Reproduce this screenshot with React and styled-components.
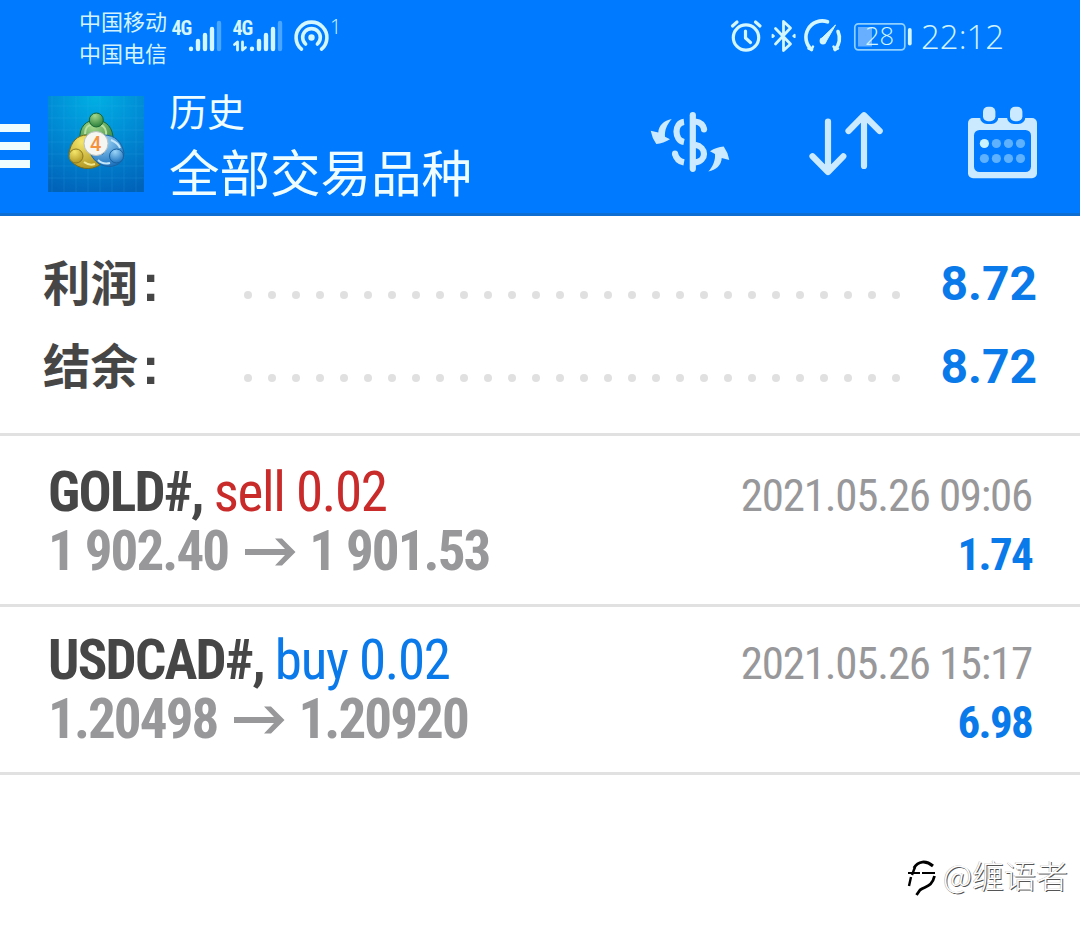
import styled, { createGlobalStyle } from "styled-components";

const GlobalStyle = createGlobalStyle`
  * {
    box-sizing: border-box;
  }
  body {
    margin: 0;
    background-color: #fff;
    font-family: Roboto, "Noto Sans CJK SC", sans-serif;
  }
`;

const Container = styled.div`
  width: 1080px;
  height: 931px;
  overflow: hidden;
  background-color: #fff;
  display: flex;
  flex-direction: column;
`;

const Top = styled.header`
  height: 216px;
  background-color: #007aff;
  border-bottom: 3px solid #0f6ed2;
  color: #effdff;
`;

const StatusBar = styled.div`
  height: 76px;
  display: flex;
  justify-content: space-between;
  padding: 0 77px 0 79px;
`;

const StatusGroup = styled.div`
  display: flex;
  align-items: flex-start;
`;

const Carriers = styled.div`
  width: 90px;
  padding-top: 4px;
  font-family: "Noto Sans CJK SC", sans-serif;
  font-size: 22px;
  line-height: 32px;
  white-space: nowrap;
  color: #d3f4ff;
`;

const StatusIcon = styled.svg`
  display: block;
  height: 76px;
  fill: none;
  stroke: #d3f6ff;
  stroke-linecap: round;
  stroke-linejoin: round;

  text {
    fill: #d3f6ff;
    stroke: none;
  }
`;

const NetText = styled.text`
  font-family: "Roboto Condensed", Roboto, sans-serif;
  font-stretch: 75%;
  font-weight: 700;
  font-size: 20px;
  letter-spacing: -1px;
`;

const ThinText = styled.text`
  font-family: "Open Sans", "Noto Sans", sans-serif;
  font-weight: 300;
  font-size: ${props => props.$size}px;
`;

const Clock = styled.div`
  width: 82px;
  margin-left: 7px;
  padding-top: 17px;
  font-family: "Open Sans", "Noto Sans", sans-serif;
  font-weight: 300;
  font-size: 33px;
  line-height: 40px;
  color: #d3f4ff;
`;

const AppBar = styled.div`
  height: 137px;
  display: flex;
  align-items: flex-start;
`;

const Menu = styled.div`
  width: 30px;
  margin-top: 48px;
  display: flex;
  flex-direction: column;
  gap: 10px;
`;

const MenuLine = styled.span`
  height: 8px;
  background-color: #effdff;
`;

const Logo = styled.svg`
  margin: 20px 0 0 18px;
`;

const LogoText = styled.text`
  font-family: Roboto, sans-serif;
  font-size: 20px;
  font-weight: 500;
  fill: #f5923e;
`;

const Titles = styled.div`
  flex: 1;
  margin: 14px 0 0 25px;
  font-family: "Noto Sans CJK SC", sans-serif;
`;

const SubTitle = styled.div`
  font-size: 38px;
  line-height: 40px;
`;

const Title = styled.div`
  margin-top: 10px;
  font-size: 50.5px;
  line-height: 60px;
`;

const Actions = styled.div`
  display: flex;
  gap: 76px;
  padding: 29px 42px 0 0;
`;

const ActionIcon = styled.svg`
  display: block;
  height: 76px;
  fill: none;
  stroke: #cbeaff;
  stroke-width: 6.2;
  stroke-linecap: round;
  stroke-linejoin: round;
`;

const Summary = styled.section`
  height: 220px;
  padding: 26px 43px 0;
  border-bottom: 3px solid #e1e1e1;
`;

const SummaryRow = styled.div`
  height: 83px;
  display: flex;
  align-items: flex-start;
`;

const Label = styled.div`
  width: 201px;
  font-family: "Noto Sans CJK SC", sans-serif;
  font-weight: 700;
  font-size: 47.5px;
  line-height: 77px;
  color: #464646;
`;

const Colon = styled.span`
  margin-left: 4px;
  font-family: "Liberation Sans", sans-serif;
  font-size: 52px;
  line-height: 1;
`;

const Dots = styled.div`
  width: 656px;
  display: flex;
  justify-content: space-between;
  margin-top: 49px;
`;

const Dot = styled.span`
  width: 8px;
  height: 8px;
  border-radius: 50%;
  background-color: #e0e0e0;
`;

const Total = styled.div`
  flex: 1;
  text-align: right;
  font-weight: 700;
  font-size: 48px;
  line-height: 83px;
  color: #0a7aea;
`;

const Deal = styled.article`
  height: ${props => props.$height}px;
  padding: ${props => props.$top}px 48px 0;
  border-bottom: 3px solid #e1e1e1;
  display: flex;
  justify-content: space-between;
`;

const DealSide = styled.div`
  font-family: "Roboto Condensed", Roboto, sans-serif;
  font-stretch: 75%;
  white-space: nowrap;
  text-align: ${props => (props.$right ? "right" : "left")};
`;

const Symbol = styled.div`
  font-weight: 700;
  font-size: 55px;
  line-height: 59px;
  letter-spacing: -1.75px;
  color: #464646;
`;

const Kind = styled.span`
  font-weight: 400;
  letter-spacing: -1.3px;
  color: ${props => (props.$sell ? "#c92a2a" : "#0a7aea")};
`;

const Prices = styled.div`
  display: flex;
  align-items: center;
  font-weight: 700;
  font-size: 55px;
  line-height: 59px;
  letter-spacing: -1.9px;
  color: #98989b;
`;

const Arrow = styled.svg`
  margin: 0 13px 0 17px;
  fill: #98989b;
`;

const Time = styled.div`
  margin-top: 3px;
  font-size: 45px;
  line-height: 59px;
  letter-spacing: -1.25px;
  color: #98989b;
`;

const Profit = styled.div`
  font-weight: 700;
  font-size: 45px;
  line-height: 59px;
  letter-spacing: -1.7px;
  color: #0a7aea;
`;

const Watermark = styled.footer`
  display: flex;
  align-items: center;
  justify-content: flex-end;
  height: 50px;
  margin-top: 74px;
  padding-right: 12px;
  font-family: "Noto Sans CJK SC", sans-serif;
  font-weight: 300;
  font-size: 32px;
  line-height: 50px;
  color: #fff;
  text-shadow: 1px 1px 0.5px #555, -0.5px -0.5px 0.5px #aaa;
`;

const WatermarkLogo = styled.svg`
  margin-top: 5px;
  fill: none;
  stroke: #000;
`;

const SignalBars = ({ x }) => (
  <g strokeWidth="4.4">
    <path d={`M${x} 48.8v0.2M${x + 7} 41v8M${x + 14} 35v14M${x + 21} 29v20`} />
    <path d={`M${x + 28} 23v26`} stroke="#4ba6ff" />
  </g>
);

const AppLogo = () => (
  <Logo width="96" height="96" viewBox="0 0 96 96">
    <defs>
      <radialGradient id="bg" cx="0.5" cy="0" r="1.05">
        <stop offset="0" stopColor="#00b0e4" />
        <stop offset="0.5" stopColor="#008ad4" />
        <stop offset="1" stopColor="#0063ba" />
      </radialGradient>
      <radialGradient id="green" cx="0.4" cy="0.2" r="0.8">
        <stop offset="0" stopColor="#a5d98c" />
        <stop offset="1" stopColor="#2b803b" />
      </radialGradient>
      <radialGradient id="yellow" cx="0.4" cy="0.2" r="0.8">
        <stop offset="0" stopColor="#f5e66b" />
        <stop offset="1" stopColor="#b39925" />
      </radialGradient>
      <radialGradient id="blue" cx="0.4" cy="0.2" r="0.8">
        <stop offset="0" stopColor="#9bd4f7" />
        <stop offset="1" stopColor="#1f73bd" />
      </radialGradient>
    </defs>
    <rect width="96" height="96" fill="url(#bg)" />
    <path
      d="M4 0v96M16 0v96M28 0v96M40 0v96M52 0v96M64 0v96M76 0v96M88 0v96M0 10h96M0 22h96M0 34h96M0 46h96M0 58h96M0 70h96M0 82h96"
      stroke="#4dbdf0"
      strokeOpacity="0.15"
    />
    <g strokeWidth="1">
      <path d="M32 43C31 31 38 24 48 24S66 32 65 45C64 51 61 54 58 56L37 40Z" fill="url(#green)" stroke="#176634" />
      <path d="M37 38C37 32 40 29 43 29M58 40C59 34 56 30 53 29" fill="none" stroke="#b9e0a2" strokeWidth="2" />
      <path d="M21 57C23 46 29 39 39 39L42 56C45 61 48 66 52 69C42 75 31 73 24 66Z" fill="url(#yellow)" stroke="#756c1b" />
      <path d="M36 66C40 69 44 69 47 68" fill="none" stroke="#f2e88f" strokeWidth="2" />
      <path d="M56 39C67 39 74 46 76 57C76 67 67 72 57 70C49 68 45 63 42 57L55 58Z" fill="url(#blue)" stroke="#1762a3" />
      <path d="M50 64C54 68 58 68 62 67M63 44C68 46 71 49 72 52" fill="none" stroke="#c3e6fa" strokeWidth="2" />
      <circle cx="48.3" cy="24" r="7" fill="url(#green)" stroke="#176634" />
      <circle cx="28" cy="60" r="7" fill="url(#yellow)" stroke="#8d7b20" />
      <circle cx="68.5" cy="60" r="7" fill="url(#blue)" stroke="#1762a3" />
      <circle cx="48" cy="47.5" r="12" fill="#f5f5f2" stroke="#b9c2c0" />
    </g>
    <LogoText x="42" y="54.8">4</LogoText>
  </Logo>
);

const SummaryLine = ({ label, value }) => (
  <SummaryRow>
    <Label>{label}<Colon>:</Colon></Label>
    <Dots>{Array.from({ length: 28 }, (_, i) => <Dot key={i} />)}</Dots>
    <Total>{value}</Total>
  </SummaryRow>
);

const deals = [
  { symbol: "GOLD#", kind: "sell", volume: "0.02", open: "1 902.40", close: "1 901.53", time: "2021.05.26 09:06", profit: "1.74" },
  { symbol: "USDCAD#", kind: "buy", volume: "0.02", open: "1.20498", close: "1.20920", time: "2021.05.26 15:17", profit: "6.98" },
];

const App = () => {
  return (
    <Container>
      <GlobalStyle />
      <Top>
        <StatusBar>
          <StatusGroup>
            <Carriers>中国移动<br />中国电信</Carriers>
            <StatusIcon width="56" viewBox="169 0 56 76">
              <NetText x="171.5" y="35">4G</NetText>
              <SignalBars x={191} />
            </StatusIcon>
            <StatusIcon width="62" viewBox="225 0 62 76">
              <NetText x="232.5" y="35">4G</NetText>
              <path d="M234.5 44.5L237.5 42v8M242.5 42v8L245.5 47.5" strokeWidth="2.8" />
              <SignalBars x={252} />
            </StatusIcon>
            <StatusIcon width="55" viewBox="287 0 55 76">
              <path d="M301.5 49.2A15.4 15.4 0 1 1 321.5 49.2" strokeWidth="3.6" />
              <path d="M305.6 44A8.8 8.8 0 1 1 317.4 44" strokeWidth="3.6" />
              <circle cx="311.5" cy="37.5" r="3.2" fill="#d3f6ff" stroke="none" />
              <ThinText $size={20} x="330" y="34">1</ThinText>
            </StatusIcon>
          </StatusGroup>
          <StatusGroup>
            <StatusIcon width="38" viewBox="727 0 38 76" strokeWidth="3.2">
              <circle cx="745" cy="37.5" r="12.7" />
              <path d="M744.5 31V38L749.5 42.5M731.5 26L736 22M759 26L754.5 22" />
            </StatusIcon>
            <StatusIcon width="35" viewBox="765 0 35 76" strokeWidth="2.8">
              <path d="M774.5 28.5L789.5 44L782.5 50.5V21.5L789.5 28L774.5 44" />
              <path d="M771.5 34.8V37.2L773 36ZM793.7 34.8V37.2L792.2 36Z" strokeWidth="1.8" />
            </StatusIcon>
            <StatusIcon width="46" viewBox="800 0 46 76" strokeWidth="3.6">
              <path d="M810.5 49.5A16.3 16.3 0 0 1 826.5 21.8M837 31.5A16.3 16.3 0 0 1 834 49.5" />
              <path d="M807.5 48.5L810.5 49.5L812 46.5M837 48.5L834 49.5L832.5 46.5" strokeWidth="2.5" />
              <circle cx="822" cy="41" r="3.4" fill="#d3f6ff" stroke="none" />
              <path d="M820 39L834.5 25L824.5 42.5Z" fill="#d3f6ff" strokeWidth="1" />
            </StatusIcon>
            <StatusIcon width="67" viewBox="846 0 67 76">
              <rect x="853.8" y="23.8" width="50" height="26" rx="3.5" stroke="#8fd0ff" strokeWidth="1.7" />
              <rect x="857" y="27" width="14" height="19.5" fill="#68b0ff" stroke="none" />
              <path d="M908.8 30V43.5" strokeWidth="3.8" />
              <ThinText $size={25.5} x="864" y="45.3">28</ThinText>
            </StatusIcon>
            <Clock>22:12</Clock>
          </StatusGroup>
        </StatusBar>
        <AppBar>
          <Menu>
            <MenuLine />
            <MenuLine />
            <MenuLine />
          </Menu>
          <AppLogo />
          <Titles>
            <SubTitle>历史</SubTitle>
            <Title>全部交易品种</Title>
          </Titles>
          <Actions>
            <ActionIcon width="82" viewBox="649 105 82 76">
              <path d="M692.8 115.2V168.8" />
              <g strokeLinecap="butt">
                <path d="M684 121.8C674 123 674 140 684 142M684 162.4C679 161.5 676 158.5 674.8 153M695 121.5C700 122 703.5 125 704.3 130M695 144.8C707 147 707 161 695 162.5" />
              </g>
              <circle cx="704" cy="129.5" r="3" fill="#cbeaff" stroke="none" />
              <circle cx="675" cy="153.5" r="3" fill="#cbeaff" stroke="none" />
              <g fill="#cbeaff" stroke="none">
                <path id="swap" d="M671.7 119C664 120.5 658.5 125.5 658.3 132.6L650.7 130.7Q652 138 656.3 144Q663.5 143.5 670 139.3L665 136.7C664.5 130 667 124.5 671.7 119Z" />
                <use href="#swap" transform="rotate(180 690 145.3)" />
              </g>
            </ActionIcon>
            <ActionIcon width="80" viewBox="807 105 80 76">
              <path d="M828 121.5V171.5M812.5 156.3L828 172L843.3 156.3" />
              <path d="M864 166V115.5M848.5 131L864 115.2L879.7 131" />
            </ActionIcon>
            <ActionIcon width="75" viewBox="963 105 75 76">
              <g stroke="none">
                <rect x="968" y="118" width="69" height="60.3" rx="5" fill="#cbeaff" />
                <rect x="974" y="130" width="57" height="42" rx="5.5" fill="#007aff" />
                <rect x="980" y="104" width="18.4" height="20" rx="7" fill="#007aff" />
                <rect x="1007" y="104" width="18.4" height="20" rx="7" fill="#007aff" />
                <rect x="983" y="106.8" width="12.4" height="14.4" rx="5" fill="#cbeaff" />
                <rect x="1010" y="106.8" width="12.4" height="14.4" rx="5" fill="#cbeaff" />
                {[143.5, 158.5].map(y =>
                  [984.4, 996.4, 1008.5, 1020.5].map((x, i) => (
                    <circle key={x} cx={x} cy={y} r="4.6" fill={y < 150 && i === 0 ? "#c8f3ff" : "#5db1ff"} />
                  ))
                )}
              </g>
            </ActionIcon>
          </Actions>
        </AppBar>
      </Top>
      <Summary>
        <SummaryLine label="利润" value="8.72" />
        <SummaryLine label="结余" value="8.72" />
      </Summary>
      {deals.map((d, i) => (
        <Deal key={d.symbol} $height={i ? 168 : 171} $top={i ? 24 : 27}>
          <DealSide>
            <Symbol>{d.symbol}, <Kind $sell={d.kind === "sell"}>{d.kind} {d.volume}</Kind></Symbol>
            <Prices>
              {d.open}
              <Arrow width="51" height="30" viewBox="0 0 51 30">
                <path d="M0 12H40L30 1.5H37L50.5 15L37 28.5H30L40 18H0Z" />
              </Arrow>
              {d.close}
            </Prices>
          </DealSide>
          <DealSide $right>
            <Time>{d.time}</Time>
            <Profit>{d.profit}</Profit>
          </DealSide>
        </Deal>
      ))}
      <Watermark>
        <WatermarkLogo width="38" height="44" viewBox="904 857 38 44">
          <path d="M913 870C917 863 925 862 932 868" strokeWidth="3" />
          <path d="M907 875H919M921 875H934" strokeWidth="1.8" />
          <path d="M910 879L908 888M914 869L911 877" strokeWidth="2.4" />
          <path d="M933.5 878C931 889 925 888 919 892L915.5 897" strokeWidth="2.8" />
        </WatermarkLogo>
        @缠语者
      </Watermark>
    </Container>
  );
};

export default App;
